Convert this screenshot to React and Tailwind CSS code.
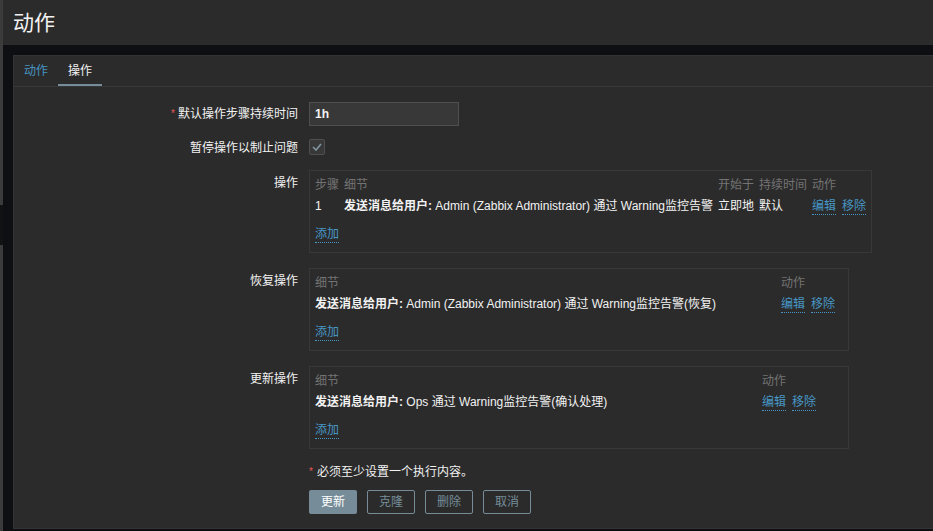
import React from "react";

const FONT = "font-['Liberation_Sans','Noto_Sans_CJK_SC',sans-serif]";

function A({ children }) {
  return (
    <a className="block leading-[16px] text-[#4796c4] border-b border-dotted border-[#4796c4] cursor-pointer">
      {children}
    </a>
  );
}

function Detail({ who, tail }) {
  return (
    <>
      <span className="font-bold">发送消息给用户:</span> {who} 通过 {tail}
    </>
  );
}

function Box({ head, rows, lastWidth }) {
  const last = head.length - 1;
  return (
    <div className="inline-block min-w-[540px] border border-[#383838] px-[5px] pt-[6px] pb-[9px]">
      <table className="w-full border-collapse">
        <thead>
          <tr className="text-[#737373]">
            {head.map((h, i) => (
              <th
                key={i}
                className={
                  "text-left font-normal leading-[16px] p-0 whitespace-nowrap " +
                  (i === last ? "pr-0 " + (lastWidth || "") : "pr-[5px]")
                }
              >
                {h}
              </th>
            ))}
          </tr>
        </thead>
        <tbody>
          {rows.map((r, ri) => (
            <tr key={ri}>
              {r.map((c, ci) => (
                <td
                  key={ci}
                  className={
                    "pt-[5px] pb-0 pl-0 leading-[16px] whitespace-nowrap align-top " +
                    (ci === last ? "pr-0" : "pr-[5px]")
                  }
                >
                  {c}
                </td>
              ))}
            </tr>
          ))}
        </tbody>
      </table>
      <div className="mt-[11px] flex">
        <A>添加</A>
      </div>
    </div>
  );
}

function Actions() {
  return (
    <span className="flex gap-[6px]">
      <A>编辑</A>
      <A>移除</A>
    </span>
  );
}

export default function App() {
  return (
    <div className={`${FONT} w-[933px] h-[531px] overflow-hidden flex bg-[#0e0f12] text-[12px] text-[#f2f2f2]`}>
      {/* left strip */}
      <div className="w-[3px] flex flex-col shrink-0">
        <div className="h-[205px] bg-[#3b3b3b]" />
        <div className="h-[40px] bg-[#111214]" />
        <div className="flex-1 bg-[#3b3b3b]" />
      </div>
      <div className="flex-1 flex flex-col min-w-0">
        <div className="h-[45px] bg-[#2b2b2b] flex items-center pl-[10px] shrink-0">
          <h1 className="text-[21px] leading-[24px] text-[#f2f2f2] font-normal">动作</h1>
        </div>
        <div className="flex-1 pl-[10px] pt-[10px] pb-[2px] flex flex-col">
          <div className="flex-1 bg-[#2b2b2b] border border-r-0 border-[#333333] flex flex-col">
            {/* tabs */}
            <div className="flex border-b border-[#383838] h-[31px]">
              <div className="px-[10px] h-[30px] flex items-center text-[#4796c4]">动作</div>
              <div className="px-[10px] h-[30px] flex items-center text-[#f2f2f2] border-b-2 border-[#768d99] pt-[2px]">
                操作
              </div>
            </div>

            <div className="flex flex-col">
              {/* row 1 */}
              <div className="flex items-center mt-[15px]">
                <div className="w-[284px] shrink-0 text-right leading-[16px]">
                  <span className="text-[#e45959] text-[10px] align-top mr-[3px]">*</span>默认操作步骤持续时间
                </div>
                <div className="ml-[11px] w-[150px] h-[24px] bg-[#383838] border border-[#4f4f4f] px-[5px] flex items-center font-semibold">
                  1h
                </div>
              </div>

              {/* row 2 */}
              <div className="flex items-start mt-[13px]">
                <div className="w-[284px] shrink-0 text-right leading-[16px] pt-[1px]">暂停操作以制止问题</div>
                <div className="ml-[11px] w-[16px] h-[16px] bg-[#383838] border border-[#4f4f4f] rounded-[2px] flex items-center justify-center">
                  <svg width="10" height="8" viewBox="0 0 10 8">
                    <polyline points="1,4 4,7 9,1" fill="none" stroke="#7f95a1" strokeWidth="1.6" />
                  </svg>
                </div>
              </div>

              {/* row 3 */}
              <div className="flex items-start mt-[14px]">
                <div className="w-[284px] shrink-0 text-right leading-[16px] pt-[5px]">操作</div>
                <div className="ml-[11px] flex">
                  <Box
                    head={["步骤", "细节", "开始于", "持续时间", "动作"]}
                    rows={[
                      [
                        "1",
                        <Detail who="Admin (Zabbix Administrator)" tail="Warning监控告警" />,
                        "立即地",
                        "默认",
                        <Actions />,
                      ],
                    ]}
                  />
                </div>
              </div>

              {/* row 4 */}
              <div className="flex items-start mt-[15px]">
                <div className="w-[284px] shrink-0 text-right leading-[16px] pt-[5px]">恢复操作</div>
                <div className="ml-[11px] flex">
                  <Box
                    head={["细节", "动作"]}
                    lastWidth="w-[62px]"
                    rows={[
                      [
                        <Detail who="Admin (Zabbix Administrator)" tail="Warning监控告警(恢复)" />,
                        <Actions />,
                      ],
                    ]}
                  />
                </div>
              </div>

              {/* row 5 */}
              <div className="flex items-start mt-[15px]">
                <div className="w-[284px] shrink-0 text-right leading-[16px] pt-[5px]">更新操作</div>
                <div className="ml-[11px] flex">
                  <Box
                    head={["细节", "动作"]}
                    lastWidth="w-[81px]"
                    rows={[
                      [<Detail who="Ops" tail="Warning监控告警(确认处理)" />, <Actions />],
                    ]}
                  />
                </div>
              </div>

              {/* note */}
              <div className="mt-[15px] ml-[295px] leading-[16px]">
                <span className="text-[#e45959] text-[10px] align-top mr-[4px]">*</span>必须至少设置一个执行内容。
              </div>

              {/* buttons */}
              <div className="mt-[10px] ml-[295px] flex gap-[10px]">
                <button className="w-[48px] h-[24px] bg-[#768d99] text-white rounded-[2px]">更新</button>
                <button className="w-[48px] h-[24px] border border-[#768d99] text-[#768d99] rounded-[2px]">克隆</button>
                <button className="w-[48px] h-[24px] border border-[#768d99] text-[#768d99] rounded-[2px]">删除</button>
                <button className="w-[48px] h-[24px] border border-[#768d99] text-[#768d99] rounded-[2px]">取消</button>
              </div>
            </div>
          </div>
        </div>
      </div>
    </div>
  );
}
